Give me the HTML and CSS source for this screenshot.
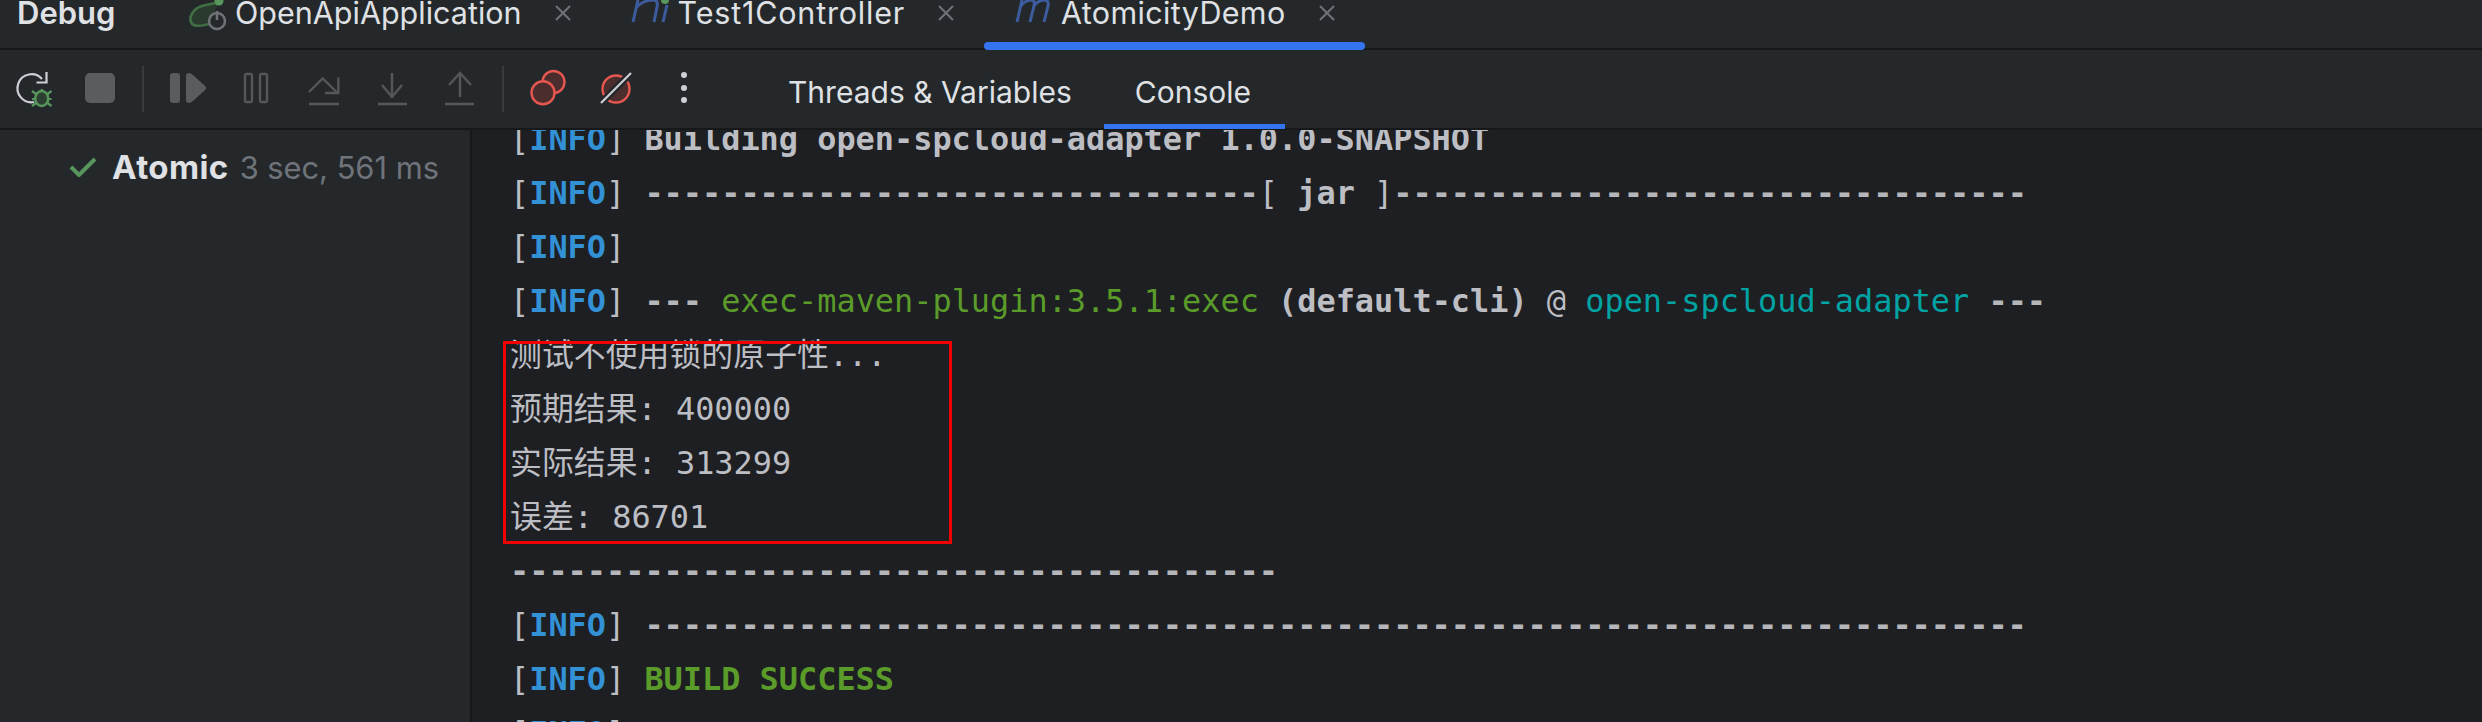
FILE: index.html
```html
<!DOCTYPE html>
<html lang="zh">
<head>
<meta charset="utf-8">
<title>Debug</title>
<link rel="stylesheet" href="styles.css">
</head>
<body>
<div class="app">
  <header class="tabbar">
    <span class="title">Debug</span>
    <div class="tab">
      <svg class="tab-icon" width="38" height="30" viewBox="0 0 38 30"><path class="leaf" d="M30 2C22 5 13 4 7 9 1 14 0 20 3 24c4 4 12 1 17 0"/><circle class="dot" cx="30" cy="1" r="4.5"/><circle class="power" cx="28" cy="21" r="8"/><path class="power" d="M28 11v9"/></svg>
      <span class="tab-label">OpenApiApplication</span>
      <svg class="close" width="16" height="16" viewBox="0 0 16 16"><path d="M1 1l14 14M15 1L1 15"/></svg>
    </div>
    <div class="tab">
      <svg class="tab-icon" width="38" height="30" viewBox="0 0 38 30"><path class="maven" d="M1 22L6 0M4 8C8 3 15 0 21 0c4 0 5 3 4 7l-3 15M31 22l4-17"/><circle class="dot" cx="33" cy="0" r="4"/></svg>
      <span class="tab-label wide">Test1Controller</span>
      <svg class="close" width="16" height="16" viewBox="0 0 16 16"><path d="M1 1l14 14M15 1L1 15"/></svg>
    </div>
    <div class="tab active">
      <svg class="tab-icon" width="38" height="30" viewBox="0 0 38 30"><path class="maven" d="M2 22L7 0M5 7C8 3 12 0 16 0c3 0 4 2 3 6l-4 16M18 7c3-4 7-7 11-7 3 0 5 2 4 6l-4 16"/></svg>
      <span class="tab-label roomy">AtomicityDemo</span>
      <svg class="close" width="16" height="16" viewBox="0 0 16 16"><path d="M1 1l14 14M15 1L1 15"/></svg>
    </div>
  </header>

  <nav class="toolbar">
    <svg class="tool" viewBox="0 0 40 40"><path class="light" d="M30 10A14 14 0 1 0 22 33"/><path class="light" d="M24.500 13.500H34.500V3"/><ellipse class="bug" cx="29.700" cy="29.500" rx="6.500" ry="7.500"/><path class="bug-leg" d="M29.700 22v-2M24 25l-4-3M35.500 25l4-3M23 30h-3M36.500 30h3M24 34l-4 3M35.500 34l4 3"/></svg>
    <svg class="tool" viewBox="0 0 40 40"><rect class="solid" x="5" y="4" width="30" height="30" rx="5"/></svg>
    <span class="sep"></span>
    <svg class="tool" viewBox="0 0 40 40"><rect class="solid" x="2" y="4" width="10" height="30" rx="3"/><path class="solid" d="M18 7q0-3 3-3 2 0 4 2l12 11q2 2 0 4L25 32q-2 2-4 2-3 0-3-3z"/></svg>
    <svg class="tool" viewBox="0 0 40 40"><rect class="dim" x="9" y="5" width="7" height="28" rx="1.500"/><rect class="dim" x="24" y="5" width="7" height="28" rx="1.500"/></svg>
    <svg class="tool" viewBox="0 0 40 40"><path class="dim" d="M5 23L18.700 9.500 33 23.500M34.300 8.500v15.500H21M5 35h30"/></svg>
    <svg class="tool" viewBox="0 0 40 40"><path class="dim" d="M20 4v24M10 16l10 12 10-12M6 35h29"/></svg>
    <svg class="tool" viewBox="0 0 40 40"><path class="dim" d="M20 28V4M9 16L20 4l11 12M5 35h29"/></svg>
    <span class="sep"></span>
    <svg class="tool" viewBox="0 0 40 40"><circle class="bp" cx="25.500" cy="13" r="11"/><circle class="bp" cx="15" cy="23.700" r="11.500"/></svg>
    <svg class="tool" viewBox="0 0 40 40"><circle class="bp" cx="20" cy="20" r="13.500"/><path class="cut" d="M5 34L35 4"/><path class="light" d="M5 34L35 4"/></svg>
    <svg class="tool" viewBox="0 0 40 40"><circle class="kebab" cx="20" cy="6" r="3"/><circle class="kebab" cx="20" cy="19" r="3"/><circle class="kebab" cx="20" cy="31" r="3"/></svg>
    <div class="subtabs">
      <span class="subtab">Threads &amp; Variables</span>
      <span class="subtab current">Console</span>
    </div>
  </nav>

  <main class="body">
    <aside class="sidebar">
      <div class="result">
        <svg class="check" width="28" height="20" viewBox="0 0 28 20"><path d="M2 10l8 8L26 2"/></svg>
        <span class="result-name">Atomic</span>
        <span class="result-time">3 sec, 561 ms</span>
      </div>
    </aside>
    <section class="console">
      <div class="log">
        <div class="line"><span class="br">[</span><b class="info">INFO</b><span class="br">]</span> <b>Building open-spcloud-adapter 1.0.0-SNAPSHOT</b></div>
        <div class="line"><span class="br">[</span><b class="info">INFO</b><span class="br">]</span> <b class="rule">--------------------------------</b>[ <b>jar</b> ]<b class="rule">---------------------------------</b></div>
        <div class="line"><span class="br">[</span><b class="info">INFO</b><span class="br">]</span></div>
        <div class="line"><span class="br">[</span><b class="info">INFO</b><span class="br">]</span> <b class="rule">---</b> <span class="green">exec-maven-plugin:3.5.1:exec</span> <b>(default-cli)</b> @ <span class="teal">open-spcloud-adapter</span> <b class="rule">---</b></div>
        <div class="line">测试不使用锁的原子性...</div>
        <div class="line">预期结果: 400000</div>
        <div class="line">实际结果: 313299</div>
        <div class="line">误差: 86701</div>
        <div class="line"><b class="rule">----------------------------------------</b></div>
        <div class="line"><span class="br">[</span><b class="info">INFO</b><span class="br">]</span> <b class="rule">------------------------------------------------------------------------</b></div>
        <div class="line"><span class="br">[</span><b class="info">INFO</b><span class="br">]</span> <b class="green">BUILD SUCCESS</b></div>
        <div class="line"><span class="br">[</span><b class="info">INFO</b><span class="br">]</span></div>
      </div>
      <div class="highlight"></div>
    </section>
  </main>
</div>
</body>
</html>
```

FILE: styles.css
```css
* { box-sizing: border-box; }
html, body { margin: 0; padding: 0; background: #1e1f22; }

.app {
  width: 2482px;
  height: 722px;
  overflow: hidden;
  display: flex;
  flex-direction: column;
  font-family: Inter, "Noto Sans", sans-serif;
  color: #dfe1e5;
}

.tabbar {
  height: 50px;
  flex: none;
  display: flex;
  align-items: flex-start;
  background: #25282b;
  border-bottom: 2px solid #17181a;
  padding-left: 17px;
}
.title {
  width: 141px;
  font-size: 31px;
  font-weight: 600;
  line-height: 26px;
}
.tab {
  position: relative;
  height: 50px;
  display: flex;
  align-items: flex-start;
  padding: 0 30px 0 31px;
}
.tab-icon { flex: none; margin-right: 8px; overflow: visible; }
.tab-label { font-size: 30.500px; line-height: 26px; white-space: nowrap; }
.tab-label.wide { letter-spacing: 0.800px; }
.tab-label.roomy { letter-spacing: 0.350px; }
.close { flex: none; margin: 5px 0 0 33px; }
.close path { fill: none; stroke: #6f7276; stroke-width: 2; }
.tab.active::after {
  content: "";
  position: absolute;
  left: 0;
  right: 0;
  top: 42px;
  height: 8px;
  border-radius: 4px;
  background: #3574f0;
}
.leaf { fill: #2b3a2e; stroke: #3f6f43; stroke-width: 2.5; }
.dot { fill: #57965c; }
.power { fill: none; stroke: #6f7276; stroke-width: 2.5; }
.maven { fill: none; stroke: #3d5c9e; stroke-width: 3; }

.toolbar {
  height: 80px;
  flex: none;
  display: flex;
  align-items: center;
  padding-left: 12px;
  background: #25282b;
  border-bottom: 2px solid #17181a;
}
.tool { width: 40px; height: 40px; flex: none; margin-right: 28px; overflow: visible; }
.sep { width: 2px; height: 46px; flex: none; margin: 0 24px 0 -6px; background: #393b3f; }
.light { fill: none; stroke: #ced0d6; stroke-width: 2.2; }
.bug { fill: #2c3f30; stroke: #57965c; stroke-width: 2.5; }
.bug-leg { fill: none; stroke: #57965c; stroke-width: 2.2; }
.solid { fill: #5a5c5f; }
.dim { fill: none; stroke: #55575a; stroke-width: 2.4; }
.bp { fill: #4a2d2c; stroke: #e5574f; stroke-width: 2.4; }
.cut { fill: none; stroke: #25282b; stroke-width: 7; }
.kebab { fill: #ced0d6; }

.subtabs { display: flex; align-self: stretch; margin-left: 23px; }
.subtab {
  position: relative;
  display: flex;
  align-items: center;
  padding: 6px 32px 0 33px;
  font-size: 30px;
  white-space: nowrap;
}
.subtab.current { padding: 6px 34px 0 31px; }
.subtab.current::after {
  content: "";
  position: absolute;
  left: 0;
  right: 0;
  bottom: -1px;
  height: 5px;
  background: #3574f0;
}

.body { flex: 1; min-height: 0; display: flex; }
.sidebar {
  width: 472px;
  flex: none;
  background: #25282b;
  border-right: 2px solid #17181a;
  padding: 24px 0 0 69px;
}
.result { display: flex; align-items: center; height: 26px; white-space: nowrap; }
.check { flex: none; margin-right: 15px; }
.check path { fill: none; stroke: #57965c; stroke-width: 4; }
.result-name { font-size: 33px; font-weight: 700; letter-spacing: 0.400px; color: #dfe1e5; margin-right: 11px; }
.result-time { font-size: 30.800px; color: #6f737a; }

.console { position: relative; flex: 1; min-width: 0; background: #1e1f22; overflow: hidden; }
.log {
  margin: -18px 0 0 38px;
  font-size: 31.900px;
  color: #bcbec4;
}
.line {
  height: 54px;
  line-height: 54px;
  white-space: pre;
  font-family: "DejaVu Sans Mono", "Noto Sans CJK SC", monospace;
}
.info { color: #3391d5; }
.br { color: #bcbec4; }
.rule { color: #b4b6ba; }
.green { color: #5a9b2a; }
.teal { color: #00a3a3; }
.highlight {
  position: absolute;
  left: 31px;
  top: 211px;
  width: 449px;
  height: 203px;
  border: 3px solid #f00000;
}
```
